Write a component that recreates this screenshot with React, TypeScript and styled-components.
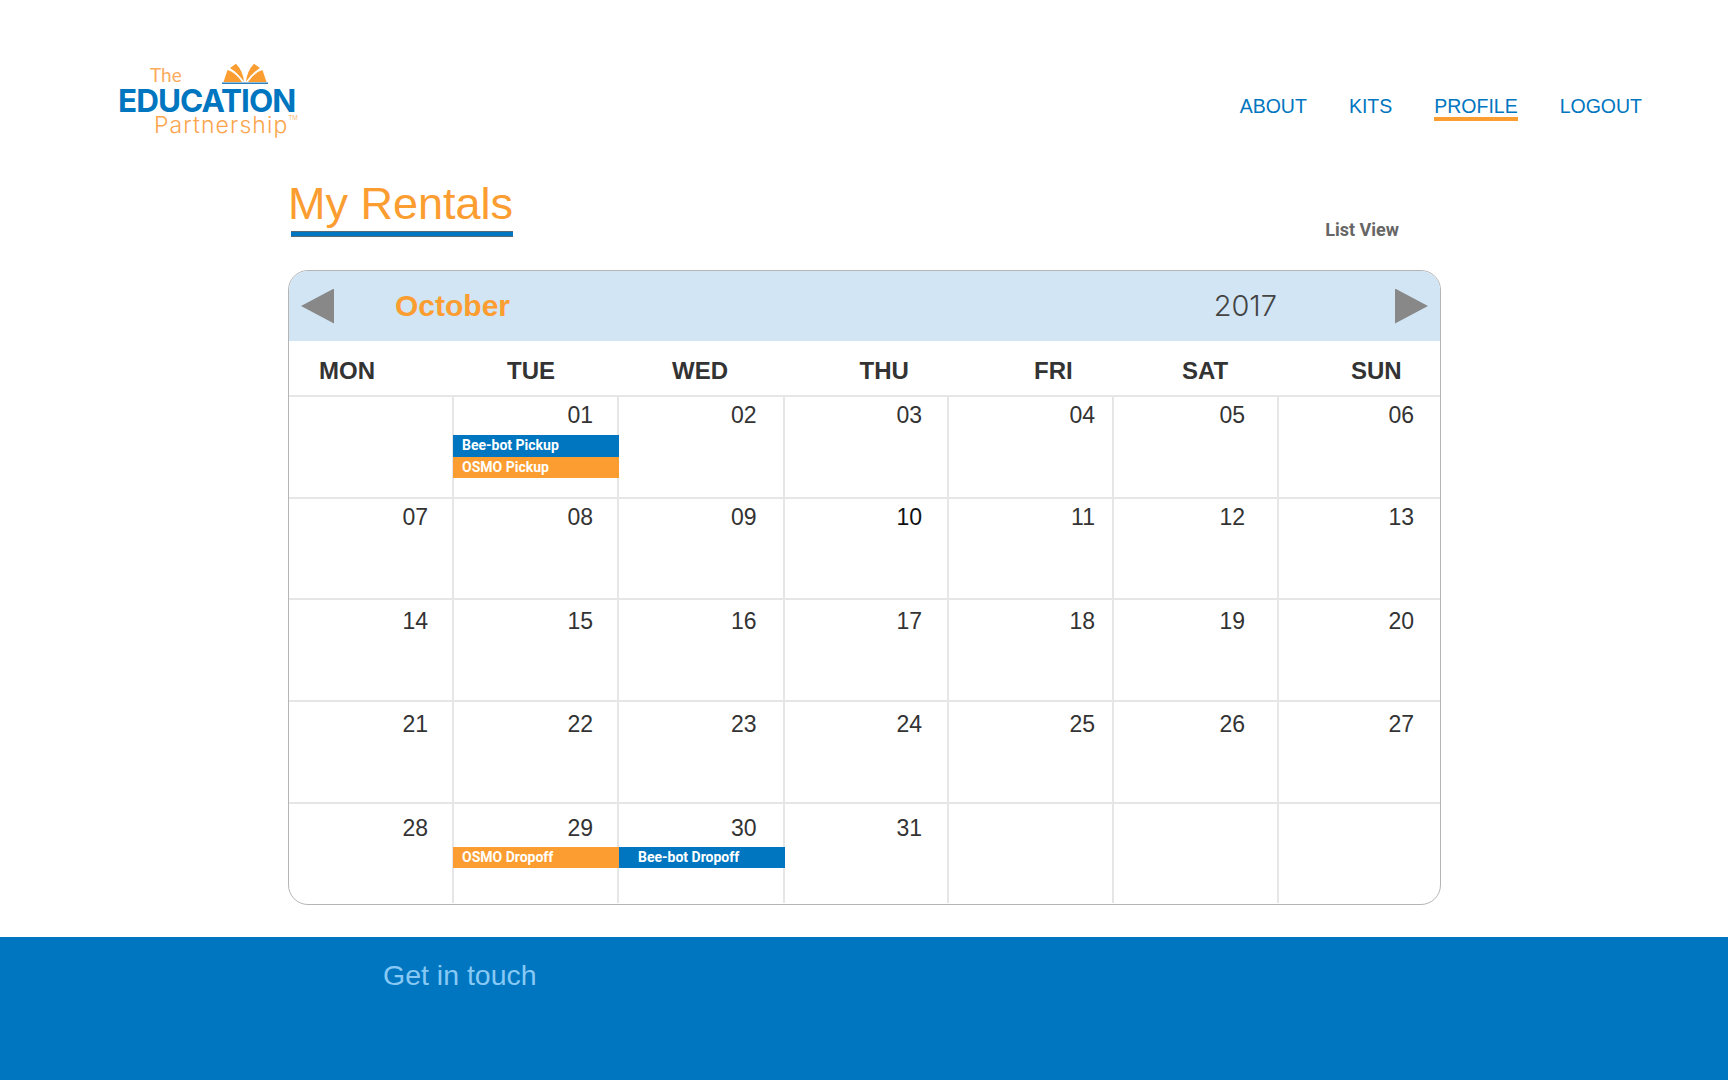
import React from "react";
import styled, { createGlobalStyle } from "styled-components";

const BLUE = "#0076c0";
const ORANGE = "#fb9d30";
const LINE = "#e6e6e6";

const GlobalStyle = createGlobalStyle`
  html, body {
    margin: 0;
    padding: 0;
    background: #fff;
    font-family: "Liberation Sans", Arial, sans-serif;
  }
`;

const Page = styled.div`
  width: 1728px;
  height: 1080px;
  overflow: hidden;
  display: flex;
  flex-direction: column;
`;

const Header = styled.header`
  height: 160px;
  box-sizing: border-box;
  padding: 62px 86px 0 118px;
  display: flex;
  justify-content: space-between;
  align-items: flex-start;
`;

const Logo = styled.div`
  width: 190px;
  display: flex;
  flex-direction: column;
`;

const LogoTop = styled.div`
  height: 22px;
  padding-left: 32px;
  display: flex;
  align-items: flex-end;
  gap: 40px;
`;

const LogoThe = styled.span`
  font-family: Lato, sans-serif;
  font-size: 19px;
  line-height: 18px;
  color: #fbab5c;
`;

const LogoMain = styled.span`
  margin-top: 2px;
  font-family: Inter, sans-serif;
  font-weight: 700;
  font-size: 31.5px;
  line-height: 30px;
  letter-spacing: -1px;
  color: ${BLUE};
  white-space: nowrap;
`;

const LogoSub = styled.span`
  margin-top: -1px;
  padding-left: 36px;
  font-family: Inter, sans-serif;
  font-weight: 300;
  font-size: 23px;
  line-height: 20px;
  letter-spacing: 1.1px;
  color: #fba54c;
  white-space: nowrap;

  sup {
    font-size: 6px;
    letter-spacing: 0;
    vertical-align: 13px;
    line-height: 0;
  }
`;

const Nav = styled.nav`
  display: flex;
  gap: 42px;
  padding-top: 33px;
`;

const NavLink = styled.a<{ $active?: boolean }>`
  font-size: 19.5px;
  line-height: 22px;
  color: ${BLUE};
  border-bottom: 4px solid ${(p) => (p.$active ? ORANGE : "transparent")};
`;

const Main = styled.main`
  width: 1153px;
  margin-left: 288px;
  flex: 1;
`;

const TitleRow = styled.div`
  height: 110px;
  display: flex;
  justify-content: space-between;
  align-items: flex-start;
  padding-right: 42px;
`;

const Title = styled.h1`
  margin: 18px 0 0;
  padding: 0;
  font-size: 45px;
  line-height: 51px;
  font-weight: 400;
  color: ${ORANGE};

  &::after {
    content: "";
    display: block;
    height: 4px;
    margin: 2px 0 0 3px;
    background: ${BLUE};
    border: 1px solid #5a6a76;
    border-width: 1px 0 1px 0;
  }
`;

const ListView = styled.a`
  margin-top: 59px;
  font-family: Roboto, sans-serif;
  font-weight: 700;
  font-size: 18px;
  line-height: 21px;
  color: #666;
`;

const Calendar = styled.section`
  height: 635px;
  box-sizing: border-box;
  border: 1px solid #b5b5b5;
  border-radius: 20px;
  overflow: hidden;
`;

const MonthBar = styled.div`
  height: 70px;
  background: #d1e5f4;
  padding: 0 12px;
  display: flex;
  align-items: center;
  justify-content: space-between;
`;

const BarGroup = styled.div`
  display: flex;
  align-items: center;
`;

const Arrow = styled.button<{ $dir: "left" | "right" }>`
  width: 33px;
  height: 35px;
  padding: 0;
  border: 0;
  background: #888;
  clip-path: ${(p) =>
    p.$dir === "left"
      ? "polygon(100% 0, 0 50%, 100% 100%)"
      : "polygon(0 0, 100% 50%, 0 100%)"};
`;

const Month = styled.span`
  margin-left: 61px;
  font-size: 30px;
  font-weight: 700;
  color: ${ORANGE};
`;

const Year = styled.span`
  margin: 0 118px 2px 0;
  font-family: Inter, sans-serif;
  font-weight: 300;
  font-size: 29px;
  color: #444;
`;

const Columns = styled.div`
  display: grid;
  grid-template-columns: 165px 165px 165.5px 164.5px 165px 165px 1fr;
`;

const WeekdayCell = styled.div<{ $indent: number }>`
  height: 54px;
  box-sizing: border-box;
  padding: 16px 0 0 ${(p) => p.$indent}px;
  font-size: 24px;
  line-height: 28px;
  font-weight: 700;
  color: #333;
`;

const DayCell = styled.div<{ $last: boolean }>`
  height: 101.7px;
  box-sizing: border-box;
  border-top: 2px solid ${LINE};
  border-right: ${(p) => (p.$last ? "0" : `2px solid ${LINE}`)};
`;

const DayNumber = styled.div<{ $top: number; $right: number; $strong?: boolean }>`
  height: 26px;
  padding: ${(p) => p.$top}px ${(p) => p.$right}px 0 0;
  text-align: right;
  font-size: 23px;
  line-height: 26px;
  color: ${(p) => (p.$strong ? "#111" : "#333")};
`;

const EventBar = styled.div<{ $color: string; $indent: number; $flush?: boolean }>`
  height: 21.5px;
  margin: 0 -2px 0 ${(p) => (p.$flush ? "0" : "-1px")};
  box-sizing: border-box;
  padding-left: ${(p) => p.$indent}px;
  background: ${(p) => p.$color};
  font-family: Roboto, sans-serif;
  font-weight: 700;
  font-size: 14px;
  line-height: 21px;
  color: #fff;
  white-space: nowrap;
`;

const Events = styled.div<{ $gap: number }>`
  margin-top: ${(p) => p.$gap}px;
`;

const Footer = styled.footer`
  height: 143px;
  box-sizing: border-box;
  background: ${BLUE};
  padding: 21px 0 0 383px;
  font-size: 28.5px;
  line-height: 34px;
  color: #87c9f4;
`;

type CalEvent = { label: string; color: string; indent: number; flush?: boolean };

const weekdays: [string, number][] = [
  ["MON", 30],
  ["TUE", 53],
  ["WED", 53],
  ["THU", 75],
  ["FRI", 85],
  ["SAT", 68],
  ["SUN", 72],
];

const events: Record<number, CalEvent[]> = {
  1: [
    { label: "Bee-bot Pickup", color: BLUE, indent: 9 },
    { label: "OSMO Pickup", color: ORANGE, indent: 9 },
  ],
  29: [{ label: "OSMO Dropoff", color: ORANGE, indent: 9 }],
  30: [{ label: "Bee-bot Dropoff", color: BLUE, indent: 19, flush: true }],
};

// number drifts down a bit from row to row in the design
const rowTop = [5, 5, 8, 9, 11];
// the numbers don't line up with the column edge the same way everywhere
const colRight = [24, 24, 26, 25, 17, 32, 26];

const Cell: React.FC<{ day: number; index: number }> = ({ day, index }) => {
  const row = Math.floor(index / 7);
  const col = index % 7;
  const last = col === 6;
  if (day < 1 || day > 31) return <DayCell $last={last} />;
  return (
    <DayCell $last={last}>
      <DayNumber $top={rowTop[row]} $right={colRight[col]} $strong={day === 10}>
        {String(day).padStart(2, "0")}
      </DayNumber>
      {events[day] && (
        <Events $gap={row === 0 ? 7 : 6}>
          {events[day].map((ev) => (
            <EventBar key={ev.label} $color={ev.color} $indent={ev.indent} $flush={ev.flush}>
              {ev.label}
            </EventBar>
          ))}
        </Events>
      )}
    </DayCell>
  );
};

const BookIcon = () => (
  <svg width="46" height="22" viewBox="0 0 46 22" style={{ marginBottom: -1 }}>
    <path d="M1.5 19 L5.5 7 Q13 9 20 19 Z" fill="#fb9d30" />
    <path d="M8 5 L14 0.7 Q21 8 22 18.7 Q16 10 8 5 Z" fill="#fb9d30" />
    <path d="M44.5 19 L40.5 7 Q33 9 26 19 Z" fill="#fb9d30" />
    <path d="M38 5 L32 0.7 Q25 8 24 18.7 Q30 10 38 5 Z" fill="#fb9d30" />
    <rect x="0" y="19.5" width="46" height="1.5" fill="#2a7fbd" />
  </svg>
);

export default function App() {
  const days = Array.from({ length: 35 }, (_, i) => i);
  return (
    <Page>
      <GlobalStyle />
      <Header>
        <Logo>
          <LogoTop>
            <LogoThe>The</LogoThe>
            <BookIcon />
          </LogoTop>
          <LogoMain>EDUCATION</LogoMain>
          <LogoSub>
            Partnership<sup>TM</sup>
          </LogoSub>
        </Logo>
        <Nav>
          <NavLink>ABOUT</NavLink>
          <NavLink>KITS</NavLink>
          <NavLink $active>PROFILE</NavLink>
          <NavLink>LOGOUT</NavLink>
        </Nav>
      </Header>
      <Main>
        <TitleRow>
          <Title>My Rentals</Title>
          <ListView>List View</ListView>
        </TitleRow>
        <Calendar>
          <MonthBar>
            <BarGroup>
              <Arrow $dir="left" aria-label="Previous month" />
              <Month>October</Month>
            </BarGroup>
            <BarGroup>
              <Year>2017</Year>
              <Arrow $dir="right" aria-label="Next month" />
            </BarGroup>
          </MonthBar>
          <Columns>
            {weekdays.map(([name, indent]) => (
              <WeekdayCell key={name} $indent={indent}>
                {name}
              </WeekdayCell>
            ))}
          </Columns>
          <Columns>
            {days.map((day, i) => (
              <Cell key={day} day={day} index={i} />
            ))}
          </Columns>
        </Calendar>
      </Main>
      <Footer>Get in touch</Footer>
    </Page>
  );
}
